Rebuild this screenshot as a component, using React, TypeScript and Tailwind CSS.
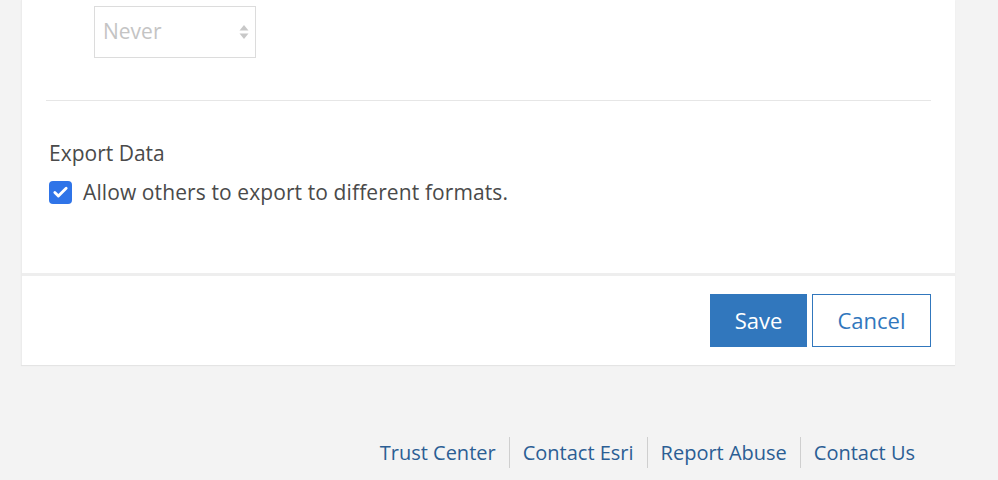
import { Check } from "lucide-react";

const footerLinks = ["Trust Center", "Contact Esri", "Report Abuse", "Contact Us"];

function NeverSelect() {
	return (
		<div className="ml-[48px] flex h-[52px] w-[162px] items-center justify-between border border-[#dcdcdc] pl-[8px] pr-[6px]">
			<span className="text-[21px] text-[#c4c4c4]">Never</span>
			<svg width="10" height="16" viewBox="0 0 10 16" className="fill-[#c8c8c8]">
				<path d="M5 1 L9.5 6.5 H0.5 Z" />
				<path d="M5 15 L9.5 9.5 H0.5 Z" />
			</svg>
		</div>
	);
}

export default function App() {
	return (
		<div className="h-[480px] w-[998px] overflow-hidden bg-[#f3f3f3] font-['Open_Sans',sans-serif] text-[#4a4a4a]">
			<div className="ml-[21px] w-[934px] border-l border-[#ececec] bg-white shadow-[0_1px_1px_rgba(0,0,0,0.06)]">
				<div className="px-[24px] pt-[6px]">
					<NeverSelect />
					<div className="mt-[42px] h-px bg-[#e6e6e6]" />
					<div className="h-[172px] pl-[3px] pt-[38px]">
						<h3 className="text-[21px] leading-[28px]">Export Data</h3>
						<label className="mt-[11px] flex items-center gap-[11px]">
							<span className="flex h-[23px] w-[23px] items-center justify-center rounded-[4px] bg-[#2f74e8]">
								<Check className="h-[17px] w-[17px] text-white" strokeWidth={4} />
							</span>
							<span className="text-[21px] leading-[28px] tracking-[0.1px]">
								Allow others to export to different formats.
							</span>
						</label>
					</div>
				</div>
				<div className="h-[3px] bg-[#eeeeee]" />
				<div className="flex h-[89px] items-center justify-end gap-[5px] pr-[24px]">
					<button className="h-[53px] w-[97px] bg-[#3177bd] text-[22px] text-white">Save</button>
					<button className="h-[53px] w-[119px] border border-[#3177bd] bg-white text-[22px] text-[#3177bd]">
						Cancel
					</button>
				</div>
			</div>
			<div className="mt-[72px] flex justify-end pr-[83px]">
				{footerLinks.map((link, i) => (
					<a
						key={link}
						className={
							i === 0
								? "pr-[13px] text-[20px] leading-[31px] text-[#2b5e94]"
								: "border-l border-[#cfcfcf] px-[13px] text-[20px] leading-[31px] text-[#2b5e94] last:pr-0"
						}
					>
						{link}
					</a>
				))}
			</div>
		</div>
	);
}
